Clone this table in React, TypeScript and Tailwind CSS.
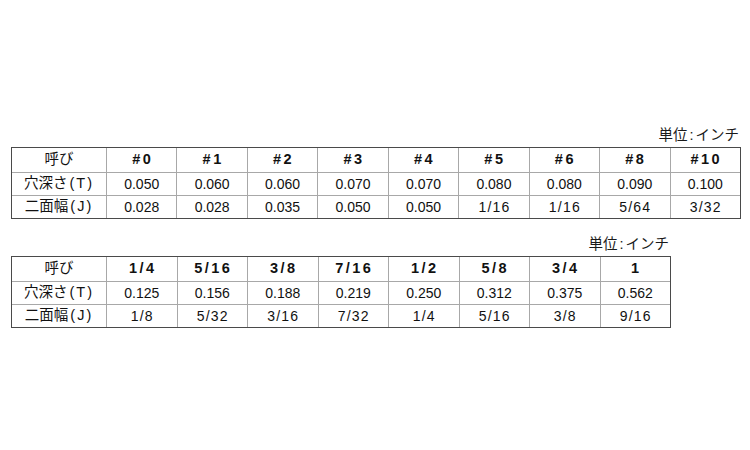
const FONT = { fontFamily: '"Liberation Sans", Arial, "Noto Sans CJK JP", sans-serif' };

type Spec = {
  sizes: string[];
  depth: string[];
  width: string[];
};

const inch1: Spec = {
  sizes: ["#0", "#1", "#2", "#3", "#4", "#5", "#6", "#8", "#10"],
  depth: ["0.050", "0.060", "0.060", "0.070", "0.070", "0.080", "0.080", "0.090", "0.100"],
  width: ["0.028", "0.028", "0.035", "0.050", "0.050", "1/16", "1/16", "5/64", "3/32"],
};

const inch2: Spec = {
  sizes: ["1/4", "5/16", "3/8", "7/16", "1/2", "5/8", "3/4", "1"],
  depth: ["0.125", "0.156", "0.188", "0.219", "0.250", "0.312", "0.375", "0.562"],
  width: ["1/8", "5/32", "3/16", "7/32", "1/4", "5/16", "3/8", "9/16"],
};

function Value({ v }: { v: string }) {
  // fractions are set a little looser than decimals
  return <span className={v.includes("/") ? "tracking-[1.2px] pl-[1px]" : ""}>{v}</span>;
}

function RowLabel({ main, letter }: { main: string; letter: string }) {
  return (
    <span className="text-[14.5px]">
      {main}
      <span className="ml-[2px] tracking-[2px]">({letter})</span>
    </span>
  );
}

function SpecTable({ spec, width }: { spec: Spec; width: string }) {
  const cols = spec.sizes.length;
  const grid =
    cols === 9
      ? "grid-cols-[94px_repeat(9,minmax(0,1fr))]"
      : "grid-cols-[94px_repeat(8,minmax(0,1fr))]";

  return (
    <div className={width}>
      <div className="flex justify-end pr-[2px] mb-[5px]">
        <span className="text-[14.5px] leading-[14px] text-[#1a1a1a]">
          単位<span className="mx-[2px]">:</span>インチ
        </span>
      </div>
      <div className={`grid ${grid} border border-[#4a4a4a] text-[#111] text-[14px]`}>
        <div className="h-[24px] flex items-center justify-center text-[14.5px]">呼び</div>
        {spec.sizes.map((s, i) => (
          <div
            key={i}
            className="h-[24px] flex items-center justify-center border-l border-[#a8a8a8] font-bold text-[14.5px] tracking-[2.5px] pl-[2px]"
          >
            {s}
          </div>
        ))}

        <div className="h-[23px] flex items-center justify-center border-t border-[#a8a8a8]">
          <RowLabel main="穴深さ" letter="T" />
        </div>
        {spec.depth.map((v, i) => (
          <div
            key={i}
            className="h-[23px] flex items-center justify-center border-t border-l border-[#a8a8a8]"
          >
            <Value v={v} />
          </div>
        ))}

        <div className="h-[23px] flex items-center justify-center border-t border-[#a8a8a8]">
          <RowLabel main="二面幅" letter="J" />
        </div>
        {spec.width.map((v, i) => (
          <div
            key={i}
            className="h-[23px] flex items-center justify-center border-t border-l border-[#a8a8a8]"
          >
            <Value v={v} />
          </div>
        ))}
      </div>
    </div>
  );
}

export default function App() {
  return (
    <div className="w-[750px] h-[450px] bg-white pl-[11px] pt-[128px]" style={FONT}>
      <SpecTable spec={inch1} width="w-[730px]" />
      <div className="h-[18px]" />
      <SpecTable spec={inch2} width="w-[660px]" />
    </div>
  );
}
